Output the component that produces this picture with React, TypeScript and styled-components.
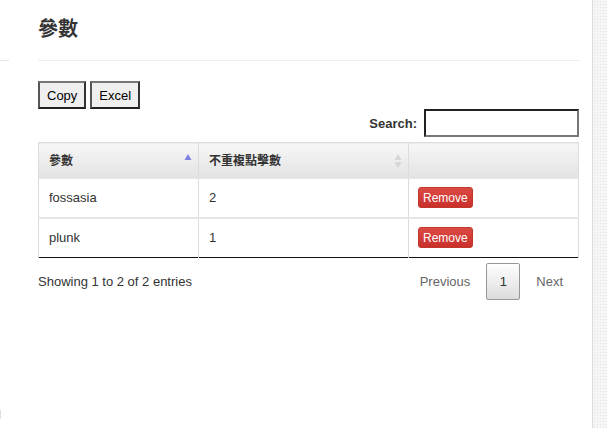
import React from "react";
import styled, { createGlobalStyle } from "styled-components";

const Global = createGlobalStyle`
  html, body { margin: 0; padding: 0; background: #fff; }
  body { font-family: "Liberation Sans", Arial, "Noto Sans CJK TC", sans-serif; color: #333; }
  * { box-sizing: border-box; }
`;

const Page = styled.div`
  display: flex;
  height: 428px;
  width: 607px;
  overflow: hidden;
`;

const Sidebar = styled.div`
  width: 9px;
  display: flex;
  flex-direction: column;
  justify-content: space-between;
  padding-top: 60px;
  padding-bottom: 9px;
`;

const SideRule = styled.div`
  height: 1px;
  background: #e6e6e6;
`;

const SideMark = styled.div`
  width: 1px;
  height: 9px;
  background: #e0e0e0;
`;

const Main = styled.div`
  flex: 1;
  padding-left: 29px;
  padding-right: 13px;
  display: flex;
  flex-direction: column;
`;

const Strip = styled.div`
  width: 15px;
  border-left: 1px solid #dcdcdc;
  background-color: #f6f6f6;
  background-image:
    repeating-linear-gradient(to bottom, transparent 0 26px, #e4e4e4 26px 27px),
    radial-gradient(circle, #e2e2e2 0.6px, transparent 0.8px);
  background-size: 100% 26px, 3px 3px;
  background-position: 0 0, 0 0;
`;

const Header = styled.div`
  padding-top: 17px;
  padding-bottom: 21px;
  border-bottom: 1px solid #eee;
`;

const Title = styled.h2`
  margin: 0;
  font-family: "Noto Sans CJK TC", sans-serif;
  font-size: 20px;
  line-height: 22px;
  font-weight: 700;
  color: #333;
`;

const ButtonsRow = styled.div`
  display: flex;
  gap: 4px;
  margin-top: 20px;
`;

const ExportButton = styled.button`
  height: 28px;
  padding: 0 7px;
  font-family: "Liberation Sans", Arial, sans-serif;
  font-size: 13px;
  color: #000;
  background: #efefef;
  border: 2px solid;
  border-color: #767676 #333 #222 #555;
  border-radius: 0;
`;

const SearchRow = styled.div`
  display: flex;
  justify-content: flex-end;
  align-items: center;
  gap: 7px;
  font-size: 13px;
  font-weight: 700;
`;

const SearchInput = styled.input`
  width: 155px;
  height: 28px;
  border: 2px solid;
  border-color: #222 #777 #777 #222;
  background: #fff;
`;

const Table = styled.table`
  margin-top: 5px;
  width: 100%;
  border-collapse: collapse;
  border-bottom: 1px solid #111;
  font-size: 13px;
`;

const Th = styled.th<{ $w?: number }>`
  position: relative;
  height: 35px;
  width: ${(p) => (p.$w ? `${p.$w}px` : "auto")};
  padding: 0 10px;
  text-align: left;
  font-family: "Noto Sans CJK TC", sans-serif;
  font-size: 12px;
  font-weight: 700;
  color: #333;
  background: linear-gradient(to bottom, #f7f7f7 0%, #e3e3e3 100%);
  border: 1px solid #dcdcdc;
  border-bottom: 2px solid #e4e4e4;
`;

const SortIcon = styled.svg<{ $top: number }>`
  position: absolute;
  right: 6px;
  top: ${(p) => p.$top}px;
`;

const Td = styled.td`
  height: 40px;
  padding: 0 10px 0 10px;
  color: #333;
  border-left: 1px solid #dcdcdc;
  border-right: 1px solid #dcdcdc;
  border-top: 2px solid #e6e6e6;
`;

const ActionTd = styled(Td)`
  padding-left: 9px;
`;

const RemoveButton = styled.button`
  height: 21px;
  padding: 0 4px;
  font-family: "Liberation Sans", Arial, sans-serif;
  font-size: 12px;
  color: #fff;
  background: linear-gradient(to bottom, #dc4a44 0%, #c9302c 100%);
  border: 1px solid #c0392b;
  border-radius: 3px;
`;

const Footer = styled.div`
  display: flex;
  justify-content: space-between;
  align-items: center;
  margin-top: 5px;
  font-size: 13px;
`;

const Info = styled.div`
  color: #333;
`;

const Pager = styled.div`
  display: flex;
  align-items: center;
`;

const PageLink = styled.span<{ $current?: boolean }>`
  display: inline-flex;
  align-items: center;
  justify-content: center;
  height: 37px;
  padding: 0 16px;
  color: ${(p) => (p.$current ? "#333" : "#666")};
  ${(p) =>
    p.$current &&
    `
    min-width: 34px;
    padding: 0;
    border: 1px solid #979797;
    border-radius: 2px;
    background: linear-gradient(to bottom, #fff 0%, #dcdcdc 100%);
  `}
`;

const rows = [
  { name: "fossasia", count: 2 },
  { name: "plunk", count: 1 },
];

export default function App() {
  return (
    <>
      <Global />
      <Page>
        <Sidebar>
          <SideRule />
          <SideMark />
        </Sidebar>
        <Main>
          <Header>
            <Title>參數</Title>
          </Header>
          <ButtonsRow>
            <ExportButton>Copy</ExportButton>
            <ExportButton>Excel</ExportButton>
          </ButtonsRow>
          <SearchRow>
            <span>Search:</span>
            <SearchInput type="search" />
          </SearchRow>
          <Table>
            <thead>
              <tr>
                <Th $w={160}>
                  參數
                  <SortIcon $top={10} width="8" height="8" viewBox="0 0 8 8">
                    <path d="M4 1 L7.5 7 L0.5 7 Z" fill="#7f7fe3" />
                  </SortIcon>
                </Th>
                <Th $w={210}>
                  不重複點擊數
                  <SortIcon $top={10} width="8" height="16" viewBox="0 0 8 16">
                    <path d="M4 1 L7.5 7 L0.5 7 Z" fill="#d6d6d6" />
                    <path d="M4 15 L7.5 9 L0.5 9 Z" fill="#d6d6d6" />
                  </SortIcon>
                </Th>
                <Th />
              </tr>
            </thead>
            <tbody>
              {rows.map((r) => (
                <tr key={r.name}>
                  <Td>{r.name}</Td>
                  <Td>{r.count}</Td>
                  <ActionTd>
                    <RemoveButton>Remove</RemoveButton>
                  </ActionTd>
                </tr>
              ))}
            </tbody>
          </Table>
          <Footer>
            <Info>Showing 1 to 2 of 2 entries</Info>
            <Pager>
              <PageLink>Previous</PageLink>
              <PageLink $current>1</PageLink>
              <PageLink>Next</PageLink>
            </Pager>
          </Footer>
        </Main>
        <Strip />
      </Page>
    </>
  );
}
